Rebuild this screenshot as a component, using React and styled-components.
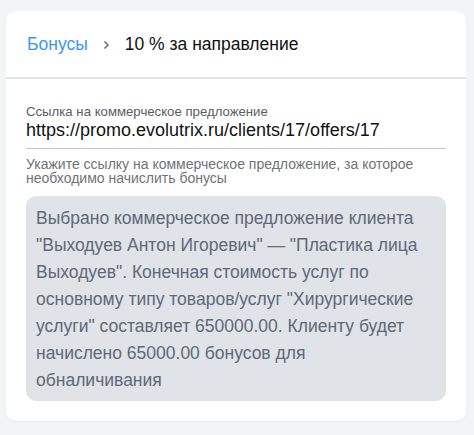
import React from "react";
import styled, { createGlobalStyle } from "styled-components";

const Global = createGlobalStyle`
  html, body {
    margin: 0;
    padding: 0;
    background: #f3f4f6;
    font-family: "Liberation Sans", Arial, sans-serif;
  }
`;

const Page = styled.div`
  padding: 11px 8px 15px 6px;
`;

const Card = styled.div`
  background: #fff;
  border-radius: 10px;
  box-shadow: 0 1px 2px rgba(0, 0, 0, 0.05);
  overflow: hidden;
`;

const Header = styled.div`
  display: flex;
  align-items: center;
  height: 66px;
  padding: 0 21px;
  border-bottom: 2px solid #e3e4e6;
  font-size: 17.5px;
`;

const Crumb = styled.a`
  color: ${({ active }) => (active ? "#111" : "#3b97f3")};
  text-decoration: none;
`;

const Sep = styled.span`
  display: flex;
  align-items: center;
  margin: 2px 15px 0 15px;
  color: #6b7280;
`;

const Body = styled.div`
  padding: 25px 20px 20px 20px;
`;

const Field = styled.div`
  display: flex;
  flex-direction: column;
  border-bottom: 1px solid #c4c6c9;
  padding-bottom: 6px;
`;

const Label = styled.label`
  font-size: 13.2px;
  color: #5a5d62;
  line-height: 15px;
`;

const Value = styled.div`
  font-size: 18px;
  color: #111;
  line-height: 23px;
`;

const Hint = styled.div`
  margin-top: 8px;
  font-size: 14px;
  line-height: 14px;
  color: #6f7277;
`;

const Notice = styled.div`
  margin-top: 11px;
  background: #e0e3e8;
  border-radius: 10px;
  padding: 9px 12px 7px 10px;
  font-size: 17.5px;
  line-height: 27px;
  color: #5e6a78;
`;

const Chevron = () => (
  <svg width="7" height="10" viewBox="0 0 7 10" fill="none">
    <path d="M1.5 1.5 L5 5 L1.5 8.5" stroke="currentColor" strokeWidth="1.6" />
  </svg>
);

export default function App() {
  return (
    <>
      <Global />
      <Page>
        <Card>
          <Header>
            <Crumb href="#">Бонусы</Crumb>
            <Sep>
              <Chevron />
            </Sep>
            <Crumb active>10 % за направление</Crumb>
          </Header>
          <Body>
            <Field>
              <Label>Ссылка на коммерческое предложение</Label>
              <Value>https://promo.evolutrix.ru/clients/17/offers/17</Value>
            </Field>
            <Hint>
              Укажите ссылку на коммерческое предложение, за которое
              необходимо начислить бонусы
            </Hint>
            <Notice>
              Выбрано коммерческое предложение клиента "Выходуев Антон
              Игоревич" — "Пластика лица Выходуев". Конечная стоимость услуг по
              основному типу товаров/услуг "Хирургические услуги" составляет
              650000.00. Клиенту будет начислено 65000.00 бонусов для
              обналичивания
            </Notice>
          </Body>
        </Card>
      </Page>
    </>
  );
}
